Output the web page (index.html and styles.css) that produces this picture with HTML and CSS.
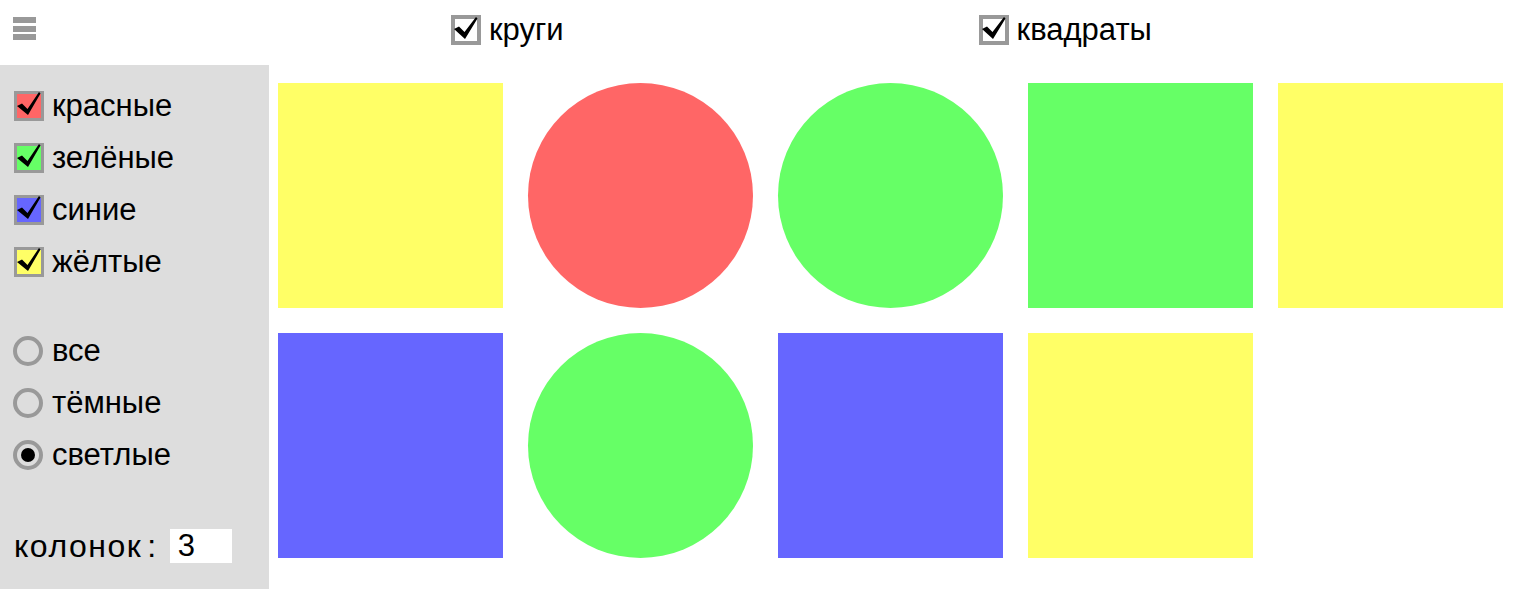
FILE: index.html
```html
<!DOCTYPE html>
<html lang="ru">
<head>
<meta charset="utf-8">
<title>Фигуры</title>
<link rel="stylesheet" href="styles.css">
</head>
<body>
<header class="topbar">
  <div class="hamburger"><span></span><span></span><span></span></div>
  <label class="toggle toggle-circles">
    <span class="box box-white"><svg viewBox="0 0 30 30"><path d="M3 14 L8 11.5 L13.5 17 L25 2 L26.5 3.5 L14 24 Z"/></svg></span>
    <span class="label">круги</span>
  </label>
  <label class="toggle toggle-squares">
    <span class="box box-white"><svg viewBox="0 0 30 30"><path d="M3 14 L8 11.5 L13.5 17 L25 2 L26.5 3.5 L14 24 Z"/></svg></span>
    <span class="label">квадраты</span>
  </label>
</header>
<div class="main">
  <aside class="sidebar">
    <div class="group">
      <label class="row"><span class="box box-red"><svg viewBox="0 0 30 30"><path d="M3 15 L8 12.5 L13.5 18 L25 1 L26.5 2.5 L14 24 Z"/></svg></span><span class="label">красные</span></label>
      <label class="row"><span class="box box-green"><svg viewBox="0 0 30 30"><path d="M3 15 L8 12.5 L13.5 18 L25 1 L26.5 2.5 L14 24 Z"/></svg></span><span class="label">зелёные</span></label>
      <label class="row"><span class="box box-blue"><svg viewBox="0 0 30 30"><path d="M3 15 L8 12.5 L13.5 18 L25 1 L26.5 2.5 L14 24 Z"/></svg></span><span class="label">синие</span></label>
      <label class="row"><span class="box box-yellow"><svg viewBox="0 0 30 30"><path d="M3 15 L8 12.5 L13.5 18 L25 1 L26.5 2.5 L14 24 Z"/></svg></span><span class="label">жёлтые</span></label>
    </div>
    <div class="group radios">
      <label class="row"><span class="radio"></span><span class="label">все</span></label>
      <label class="row"><span class="radio"></span><span class="label">тёмные</span></label>
      <label class="row"><span class="radio radio-on"></span><span class="label">светлые</span></label>
    </div>
    <div class="columns">
      <span class="columns-label">колонок<span class="colon">:</span></span>
      <span class="columns-input">3</span>
    </div>
  </aside>
  <section class="grid">
    <div class="shape square yellow"></div>
    <div class="shape circle red"></div>
    <div class="shape circle green"></div>
    <div class="shape square green"></div>
    <div class="shape square yellow"></div>
    <div class="shape square blue"></div>
    <div class="shape circle green"></div>
    <div class="shape square blue"></div>
    <div class="shape square yellow"></div>
  </section>
</div>
</body>
</html>
```
FILE: styles.css
```css
* { box-sizing: border-box; }
html, body { margin: 0; padding: 0; background: #fff; }
body {
  font-family: "Liberation Sans", Arial, sans-serif;
  font-size: 31px;
  color: #000;
  width: 1515px;
  height: 589px;
  overflow: hidden;
}
.topbar {
  height: 65px;
  display: flex;
  align-items: center;
  padding: 0 0 6px 13px;
}
.hamburger {
  width: 23px;
  display: flex;
  flex-direction: column;
  gap: 2.5px;
  margin-top: -2px;
}
.hamburger span {
  display: block;
  height: 6px;
  background: #999;
}
.toggle {
  display: flex;
  align-items: center;
  gap: 8px;
}
.toggle-circles { margin-left: 415px; }
.toggle-squares { margin-left: 415px; }
.box {
  width: 30px;
  height: 30px;
  border: 4px solid #999;
  position: relative;
  flex: none;
}
.sidebar .box { border-width: 3px; }
.box svg {
  position: absolute;
  left: -4px;
  top: -4px;
  width: 30px;
  height: 30px;
  overflow: visible;
}
.sidebar .box svg { left: -3px; top: -3px; }
.box path { fill: #000; }
.box-white { background: #fff; }
.box-red { background: #ff6666; }
.box-green { background: #66ff66; }
.box-blue { background: #6666ff; }
.box-yellow { background: #ffff66; }
.main {
  display: flex;
  height: 524px;
}
.sidebar {
  width: 269px;
  flex: none;
  background: #ddd;
  padding: 15px 0 0 14px;
}
.group { display: flex; flex-direction: column; }
.radios { margin-top: 37px; }
.row {
  height: 52px;
  display: flex;
  align-items: center;
  gap: 8px;
}
.radio {
  width: 30px;
  height: 30px;
  border-radius: 50%;
  border: 4px solid #999;
  flex: none;
  display: flex;
  align-items: center;
  justify-content: center;
  margin-left: -1px;
  margin-right: 1px;
}
.radio-on::after {
  content: "";
  width: 14px;
  height: 14px;
  border-radius: 50%;
  background: #000;
}
.columns {
  margin-top: 48px;
  display: flex;
  align-items: center;
  height: 34px;
}
.columns-label { letter-spacing: 1.5px; font-size: 32px; }
.colon { margin-left: 5px; }
.columns-input {
  margin-left: 12px;
  width: 62px;
  height: 34px;
  background: #fff;
  padding-left: 8px;
  line-height: 34px;
}
.grid {
  flex: 1;
  display: grid;
  grid-template-columns: repeat(5, 225px);
  grid-auto-rows: 225px;
  gap: 25px;
  padding: 18px 0 0 9px;
  align-content: start;
}
.shape { width: 225px; height: 225px; }
.circle { border-radius: 50%; }
.yellow { background: #ffff66; }
.red { background: #ff6666; }
.green { background: #66ff66; }
.blue { background: #6666ff; }
```
